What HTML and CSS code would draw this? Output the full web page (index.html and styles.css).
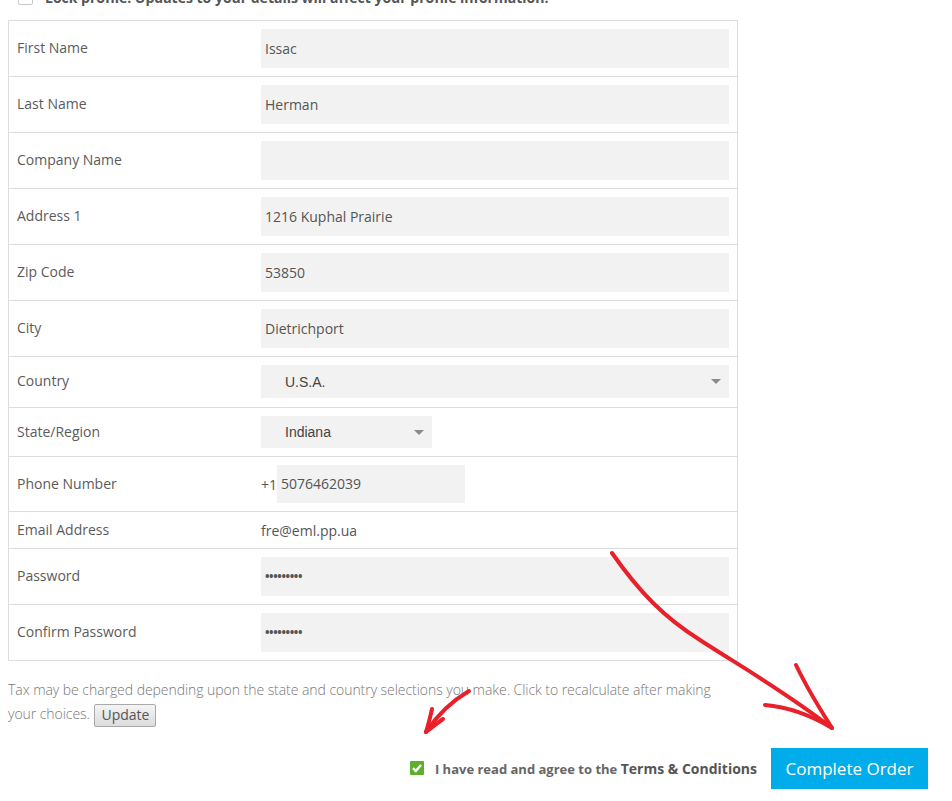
FILE: index.html
```html
<!DOCTYPE html>
<html>
<head>
<meta charset="utf-8">
<link rel="stylesheet" href="styles.css">
</head>
<body>
<div class="page">
  <div class="lock">
    <span class="lock-box"></span>
    <span class="lock-text">Lock profile: Updates to your details will affect your profile information.</span>
  </div>
  <table class="form">
    <tr><td class="lbl">First Name</td><td class="fld"><div class="inp">Issac</div></td></tr>
    <tr><td class="lbl">Last Name</td><td class="fld"><div class="inp">Herman</div></td></tr>
    <tr><td class="lbl">Company Name</td><td class="fld"><div class="inp"></div></td></tr>
    <tr><td class="lbl">Address 1</td><td class="fld"><div class="inp">1216 Kuphal Prairie</div></td></tr>
    <tr><td class="lbl">Zip Code</td><td class="fld"><div class="inp">53850</div></td></tr>
    <tr><td class="lbl">City</td><td class="fld"><div class="inp">Dietrichport</div></td></tr>
    <tr class="sel-row"><td class="lbl">Country</td><td class="fld"><div class="sel sel-wide"><span>U.S.A.</span><i class="caret"></i></div></td></tr>
    <tr class="sel-row2"><td class="lbl">State/Region</td><td class="fld"><div class="sel sel-narrow"><span>Indiana</span><i class="caret"></i></div></td></tr>
    <tr><td class="lbl">Phone Number</td><td class="fld"><div class="phone"><span class="cc">+1</span><div class="inp phone-inp">5076462039</div></div></td></tr>
    <tr class="email-row"><td class="lbl">Email Address</td><td class="fld txt">fre@eml.pp.ua</td></tr>
    <tr><td class="lbl">Password</td><td class="fld"><div class="inp pw">•••••••••</div></td></tr>
    <tr><td class="lbl">Confirm Password</td><td class="fld"><div class="inp pw">•••••••••</div></td></tr>
  </table>
  <p class="tax">Tax may be charged depending upon the state and country selections you make. Click to recalculate after making your choices. <button class="update">Update</button></p>
  <div class="footer">
    <label class="agree">
      <span class="chk"><svg width="14" height="14" viewBox="0 0 14 14"><path d="M3 7.2 L5.8 10 L11 4" fill="none" stroke="#fff" stroke-width="2.4"/></svg></span>
      <span class="agree-text">I have read and agree to the <span class="terms">Terms &amp; Conditions</span></span>
    </label>
    <button class="complete">Complete Order</button>
  </div>
  <svg class="arrows" width="952" height="801" viewBox="0 0 952 801">
    <g fill="none" stroke="#e8202a" stroke-width="4" stroke-linecap="round" stroke-linejoin="round">
      <path d="M612 567 C640 607 665 632 700 654 C735 677 780 702 832 742"/>
      <path d="M796 679 C806 700 818 720 832 742"/>
      <path d="M765 719 C790 721 812 730 832 742"/>
      <path d="M469 705 C452 715 438 728 426 746"/>
      <path d="M432 723 C430 732 428 740 426 746"/>
      <path d="M443 733 C436 738 431 742 426 746"/>
    </g>
  </svg>
</div>
</body>
</html>
```
FILE: styles.css
```css
html, body {
  margin: 0;
  padding: 0;
  background: #fff;
}
body {
  font-family: "Open Sans", "Liberation Sans", sans-serif;
  font-size: 14px;
  color: #5b5b5b;
  overflow: hidden;
  height: 801px;
}
.page {
  position: relative;
  padding: 0 8px;
  width: 936px;
  height: 801px;
}
.lock {
  display: flex;
  align-items: center;
  gap: 12px;
  margin-top: -14px;
  height: 22px;
  padding-left: 10px;
  margin-bottom: 12px;
}
.lock-box {
  width: 13px;
  height: 13px;
  border: 1px solid #c8c8c8;
  border-radius: 2px;
  background: #fff;
}
.lock-text {
  font-weight: bold;
  color: #555;
  font-size: 14px;
}
.form {
  border-collapse: collapse;
  width: 730px;
  border: 1px solid #ddd;
}
.form td {
  border-top: 1px solid #ddd;
  padding: 8px;
  vertical-align: middle;
}
.form td.lbl {
  width: 228px;
  padding-left: 8px;
  color: #5b5b5b;
  position: relative;
  top: -1px;
}
.inp {
  height: 39px;
  line-height: 39px;
  background: #f2f2f2;
  padding: 0 4px;
  color: #555;
  box-sizing: border-box;
}
.pw {
  font-size: 12px;
  font-weight: bold;
  color: #555;
  letter-spacing: -0.4px;
}
.sel {
  display: flex;
  align-items: center;
  justify-content: space-between;
  background: #f2f2f2;
  font-family: "Liberation Sans", Arial, sans-serif;
  font-size: 14px;
  color: #444;
  padding: 0 8px 0 24px;
  box-sizing: border-box;
}
.sel-wide {
  height: 33px;
}
.sel-narrow {
  height: 32px;
  width: 171px;
}
.caret {
  width: 0;
  height: 0;
  border-left: 5px solid transparent;
  border-right: 5px solid transparent;
  border-top: 5px solid #8a8a8a;
}
.sel-row td { padding-top: 8px; padding-bottom: 9px; }
.sel-row2 td { padding-top: 8px; padding-bottom: 8px; }
.phone {
  display: flex;
  align-items: center;
}
.cc {
  width: 16px;
  color: #555;
}
.phone-inp {
  width: 188px;
  height: 38px;
  line-height: 38px;
}
.email-row td {
  height: 20px;
  padding-top: 8px;
  padding-bottom: 8px;
}
.txt {
  padding-left: 8px;
  color: #555;
}
.tax {
  margin: 17px 0 0 0;
  width: 730px;
  line-height: 24px;
  color: #777;
  font-size: 14px;
  font-weight: 300;
  letter-spacing: -0.05px;
}
.update {
  font-family: "Open Sans", "Liberation Sans", sans-serif;
  font-size: 14px;
  color: #555;
  background: linear-gradient(#f4f4f4, #dcdcdc);
  border: 1px solid #a9a9a9;
  border-radius: 2px;
  padding: 0 6px;
  height: 23px;
  line-height: 20px;
  margin-left: 1px;
  vertical-align: middle;
}
.footer {
  display: flex;
  justify-content: flex-end;
  align-items: center;
  margin-top: 21px;
  gap: 14px;
  width: 920px;
}
.agree {
  display: flex;
  align-items: center;
  gap: 11px;
}
.chk {
  width: 14px;
  height: 14px;
  background: #5fae2e;
  display: flex;
  border-radius: 1px;
}
.agree-text {
  font-weight: bold;
  font-size: 13px;
  color: #666;
}
.terms {
  color: #555;
  font-size: 14px;
}
.complete {
  font-family: "Open Sans", "Liberation Sans", sans-serif;
  font-size: 17px;
  color: #fff;
  background: #00adea;
  border: none;
  width: 157px;
  height: 41px;
  padding: 0;
}
.arrows {
  position: absolute;
  left: 0;
  top: 0;
  pointer-events: none;
}
```
